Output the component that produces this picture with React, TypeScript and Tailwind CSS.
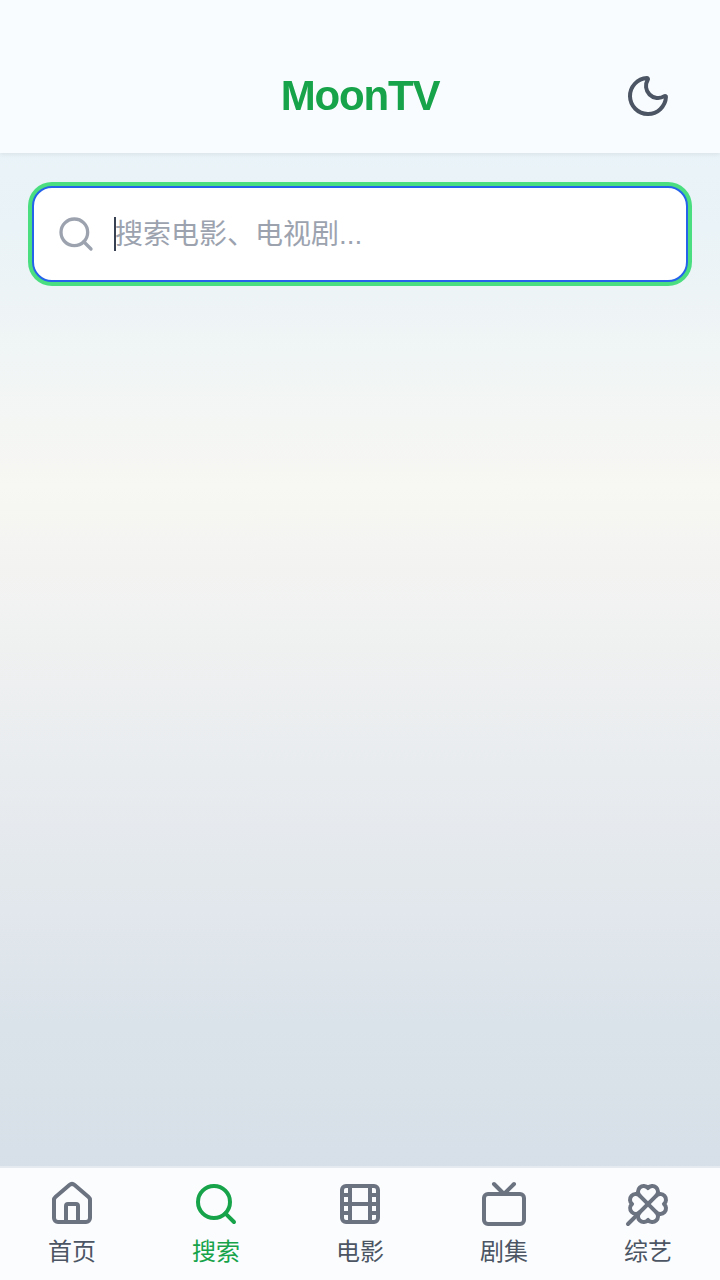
import { Clover, Film, House, Moon, Search, Tv } from 'lucide-react';

const navItems = [
  { label: '首页', icon: House, active: false },
  { label: '搜索', icon: Search, active: true },
  { label: '电影', icon: Film, active: false },
  { label: '剧集', icon: Tv, active: false },
  { label: '综艺', icon: Clover, active: false },
];

export default function App() {
  return (
    <div className="flex h-[1280px] w-[720px] flex-col overflow-hidden bg-[linear-gradient(180deg,#e6f3fb_0%,#eaf3f7_18%,#f7f7f3_38%,#e9ecef_60%,#dbe3ea_80%,#d3dde6_100%)] font-['Liberation_Sans','Noto_Sans_CJK_SC',sans-serif]">
      {/* Header */}
      <header className="relative flex h-[153px] shrink-0 items-center justify-center bg-[#f9fcfe] pt-[39px] shadow-[0_2px_4px_rgba(0,0,0,0.06)] backdrop-blur">
        <span className="text-[42px] leading-none font-bold tracking-[-1.2px] text-[#16a34a]">MoonTV</span>
        <button className="absolute top-[72px] right-[48px] text-[#4b5563]">
          <Moon size={48} strokeWidth={2} />
        </button>
      </header>

      {/* Search */}
      <main className="flex-1 px-[32px] pt-[33px]">
        <div className="relative">
          <Search size={40} strokeWidth={2} className="absolute top-[28px] left-[24px] text-[#9ca3af]" />
          <input
            placeholder="搜索电影、电视剧..."
            className="h-[96px] w-full rounded-[20px] border-2 border-[#2563eb] bg-white pt-[2px] pr-[32px] pl-[81px] text-[28px] text-[#111827] ring-4 ring-[#4ade80] outline-none placeholder:text-[#9ca3af]"
          />
          {/* text caret of the focused field */}
          <span className="absolute top-[31px] left-[82px] h-[34px] w-[2px] bg-[#374151]" />
        </div>
      </main>

      {/* Bottom nav */}
      <nav className="grid h-[114px] shrink-0 grid-cols-5 border-t-2 border-[#e5e9f0] bg-[#fbfcfe] backdrop-blur">
        {navItems.map((item) => (
          <div
            key={item.label}
            className={`flex flex-col items-center pt-[12px] ${item.active ? 'text-[#16a34a]' : 'text-[#6b7280]'}`}
          >
            <item.icon size={48} strokeWidth={2} />
            <span className={`mt-[6px] text-[24px] leading-[36px] ${item.active ? 'text-[#16a34a]' : 'text-[#4b5563]'}`}>
              {item.label}
            </span>
          </div>
        ))}
      </nav>
    </div>
  );
}
